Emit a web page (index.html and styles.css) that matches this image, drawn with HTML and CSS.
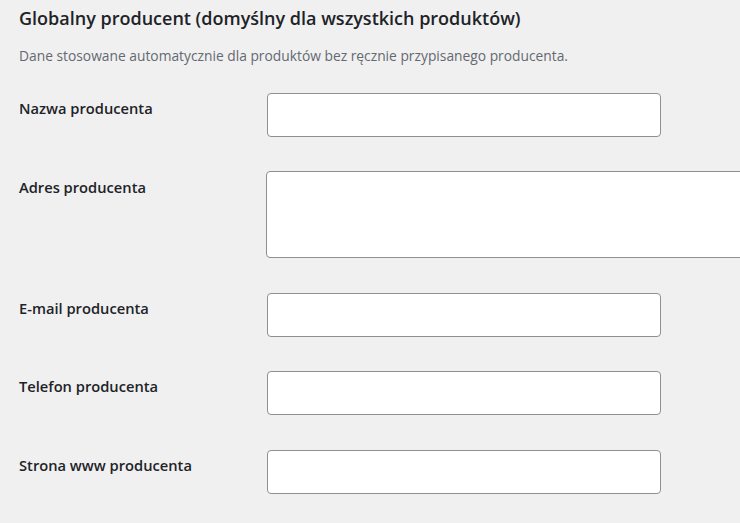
FILE: index.html
```html
<!DOCTYPE html>
<html lang="pl">
<head>
  <meta charset="UTF-8">
  <title>Globalny producent</title>
  <link rel="stylesheet" href="styles.css">
</head>
<body>

  <div class="settings">
    <h2>Globalny producent (domyślny dla wszystkich produktów)</h2>
    <p class="description">Dane stosowane automatycznie dla produktów bez ręcznie przypisanego producenta.</p>

    <div class="form-table">
      <div class="form-row">
        <label class="form-label" for="producer_name">Nazwa producenta</label>
        <div class="form-field"><input type="text" id="producer_name" class="regular-text"></div>
      </div>
      <div class="form-row">
        <label class="form-label label-area" for="producer_address">Adres producenta</label>
        <div class="form-field"><textarea id="producer_address" class="large-text"></textarea></div>
      </div>
      <div class="form-row">
        <label class="form-label" for="producer_email">E-mail producenta</label>
        <div class="form-field"><input type="email" id="producer_email" class="regular-text"></div>
      </div>
      <div class="form-row">
        <label class="form-label" for="producer_phone">Telefon producenta</label>
        <div class="form-field"><input type="text" id="producer_phone" class="regular-text"></div>
      </div>
      <div class="form-row">
        <label class="form-label" for="producer_www">Strona www producenta</label>
        <div class="form-field"><input type="url" id="producer_www" class="regular-text"></div>
      </div>
    </div>
  </div>

</body>
</html>
```

FILE: styles.css
```css
:root {
  --text: #1d2327;
  --muted: #646970;
  --border: #8c8f94;
}

body {
  font-family: "Open Sans", "Noto Sans", sans-serif;
  background: #f0f0f1;
  color: var(--text);
  margin: 0;
  padding: 0 0 0 19px;
  overflow: hidden;
}

h2 {
  font-size: 18px;
  font-weight: 600;
  margin: 0;
  padding-top: 6px;
  line-height: 24px;
}

.description {
  font-size: 13.8px;
  color: var(--muted);
  margin: 16px 0 0;
  line-height: 20px;
}

.form-table {
  margin-top: 9.5px;
}

.form-row {
  display: flex;
  align-items: flex-start;
  padding: 17.25px 0;
}

.form-label {
  width: 248px;
  flex-shrink: 0;
  font-size: 14.7px;
  font-weight: 600;
  line-height: 20px;
  padding-top: 5px;
}

.label-area {
  padding-top: 6px;
}

.form-field {
  flex: 1;
  min-width: 0;
}

input, textarea {
  box-sizing: border-box;
  background: #fff;
  border: 1px solid var(--border);
  border-radius: 4px;
  font-family: inherit;
  font-size: 14px;
  margin: 0;
  display: block;
}

.regular-text {
  width: 394px;
  height: 44px;
}

.large-text {
  width: 500px;
  height: 87px;
  margin-left: -1px;
  resize: none;
}
```
